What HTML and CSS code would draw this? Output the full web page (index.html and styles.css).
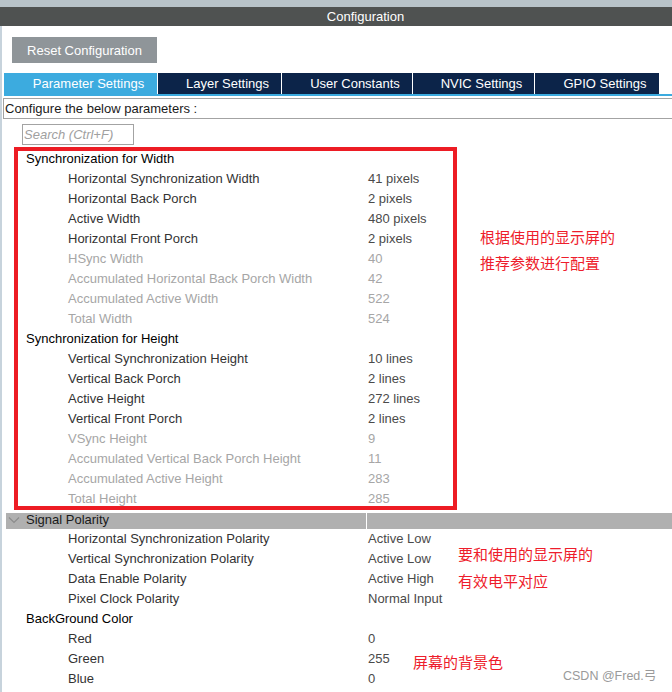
FILE: index.html
```html
<!DOCTYPE html>
<html>
<head>
<meta charset="utf-8">
<link rel="stylesheet" href="styles.css">
</head>
<body>
<div class="topstrip"></div>
<div class="titlebar">Configuration</div>
<div class="main">
  <div class="toolbar"><button class="reset">Reset Configuration</button></div>
  <div class="tabs">
    <div class="tab active t1">Parameter Settings</div>
    <div class="tab t2">Layer Settings</div>
    <div class="tab t3">User Constants</div>
    <div class="tab t4">NVIC Settings</div>
    <div class="tab t5">GPIO Settings</div>
  </div>
  <div class="tabline"></div>
  <div class="configure">Configure the below parameters :</div>
  <div class="search">Search (Ctrl+F)</div>
  <div class="rows">
    <div class="row head"><span class="lbl">Synchronization for Width</span></div>
    <div class="row item"><span class="lbl">Horizontal Synchronization Width</span><span class="val">41 pixels</span></div>
    <div class="row item"><span class="lbl">Horizontal Back Porch</span><span class="val">2 pixels</span></div>
    <div class="row item"><span class="lbl">Active Width</span><span class="val">480 pixels</span></div>
    <div class="row item"><span class="lbl">Horizontal Front Porch</span><span class="val">2 pixels</span></div>
    <div class="row item dis"><span class="lbl">HSync Width</span><span class="val">40</span></div>
    <div class="row item dis"><span class="lbl">Accumulated Horizontal Back Porch Width</span><span class="val">42</span></div>
    <div class="row item dis"><span class="lbl">Accumulated Active Width</span><span class="val">522</span></div>
    <div class="row item dis"><span class="lbl">Total Width</span><span class="val">524</span></div>
    <div class="row head"><span class="lbl">Synchronization for Height</span></div>
    <div class="row item"><span class="lbl">Vertical Synchronization Height</span><span class="val">10 lines</span></div>
    <div class="row item"><span class="lbl">Vertical Back Porch</span><span class="val">2 lines</span></div>
    <div class="row item"><span class="lbl">Active Height</span><span class="val">272 lines</span></div>
    <div class="row item"><span class="lbl">Vertical Front Porch</span><span class="val">2 lines</span></div>
    <div class="row item dis"><span class="lbl">VSync Height</span><span class="val">9</span></div>
    <div class="row item dis"><span class="lbl">Accumulated Vertical Back Porch Height</span><span class="val">11</span></div>
    <div class="row item dis"><span class="lbl">Accumulated Active Height</span><span class="val">283</span></div>
    <div class="row item dis"><span class="lbl">Total Height</span><span class="val">285</span></div>
    <div class="row group">
      <div class="gcell">
        <svg class="chev" width="12" height="8" viewBox="0 0 12 8"><polyline points="1,1.5 6,6.5 11,1.5" fill="none" stroke="#8c8c8c" stroke-width="1.2"/></svg>
        <span class="gtext">Signal Polarity</span>
      </div>
      <div class="gcell2"></div>
    </div>
    <div class="row item"><span class="lbl">Horizontal Synchronization Polarity</span><span class="val">Active Low</span></div>
    <div class="row item"><span class="lbl">Vertical Synchronization Polarity</span><span class="val">Active Low</span></div>
    <div class="row item"><span class="lbl">Data Enable Polarity</span><span class="val">Active High</span></div>
    <div class="row item"><span class="lbl">Pixel Clock Polarity</span><span class="val">Normal Input</span></div>
    <div class="row head"><span class="lbl">BackGround Color</span></div>
    <div class="row item"><span class="lbl">Red</span><span class="val">0</span></div>
    <div class="row item"><span class="lbl">Green</span><span class="val">255</span></div>
    <div class="row item"><span class="lbl">Blue</span><span class="val">0</span></div>
  </div>
</div>
<div class="redbox"></div>
<div class="note note1">根据使用的显示屏的<br>推荐参数进行配置</div>
<div class="note note2">要和使用的显示屏的<br>有效电平对应</div>
<div class="note note3">屏幕的背景色</div>
<div class="watermark">CSDN @Fred.弓</div>
</body>
</html>
```
FILE: styles.css
```css
html, body {
  margin: 0;
  padding: 0;
}
body {
  width: 672px;
  height: 692px;
  overflow: hidden;
  position: relative;
  background: #ffffff;
  font-family: "Liberation Sans", Arial, sans-serif;
  font-size: 13px;
  color: #222;
}
.topstrip {
  height: 7px;
  background: #b8c3c9;
}
.titlebar {
  height: 19px;
  line-height: 19px;
  background: #4f5251;
  color: #ffffff;
  text-align: center;
  padding-left: 59px;
}
.main {
  border-left: 2px solid #c7d3dc;
  height: 666px;
}
.toolbar {
  padding: 11px 0 0 10px;
}
.reset {
  display: block;
  width: 145px;
  height: 26px;
  border: none;
  margin: 0;
  padding: 0;
  background: #8f9599;
  color: #ffffff;
  font-family: "Liberation Sans", Arial, sans-serif;
  font-size: 13px;
}
.tabs {
  display: flex;
  gap: 1px;
  margin-top: 10px;
  padding-left: 2px;
  height: 21px;
}
.tab {
  background: #0c2449;
  color: #ffffff;
  line-height: 21px;
  display: flex;
  justify-content: center;
  padding-left: 16px;
  box-sizing: border-box;
}
.tab.active {
  background: #3cabdf;
}
.t1 { width: 153px; }
.t2 { width: 123px; }
.t3 { width: 130px; }
.t4 { width: 121px; }
.t5 { width: 124px; }
.tabline {
  margin-left: 2px;
  height: 2px;
  background: #3cabdf;
}
.configure {
  margin-top: 2px;
  margin-left: 1px;
  height: 19px;
  line-height: 19px;
  border: 1px solid #a3a3a3;
  border-right: none;
  padding-left: 1px;
  color: #1a1a1a;
}
.search {
  margin-top: 5px;
  margin-left: 20px;
  width: 109px;
  height: 19px;
  line-height: 19px;
  border: 1px solid #a3a3a3;
  padding-left: 1px;
  font-style: italic;
  color: #a0a0a0;
}
.rows {
  margin-top: 4px;
}
.row {
  height: 20px;
  line-height: 20px;
  display: flex;
  white-space: nowrap;
}
.row .lbl {
  display: block;
}
.row.head .lbl {
  padding-left: 24px;
  color: #000000;
}
.row.item .lbl {
  padding-left: 66px;
  width: 300px;
  color: #333333;
}
.row .val {
  color: #4a4a4a;
}
.row.dis .lbl,
.row.dis .val {
  color: #a6a6a6;
}
.row.group {
  margin-left: 4px;
  border-top: 4px solid #ffffff;
  height: 16px;
  line-height: 14px;
}
.gcell {
  width: 360px;
  background: #b0b0b0;
  display: flex;
  align-items: flex-start;
  color: #1a1a1a;
}
.gtext {
  display: block;
  line-height: 14px;
}
.gcell2 {
  flex: 1;
  background: #b0b0b0;
  border-left: 1px solid #ffffff;
}
.chev {
  margin-left: 2px;
  margin-right: 6px;
  margin-top: 3px;
}
.redbox {
  position: absolute;
  left: 14px;
  top: 147px;
  width: 443px;
  height: 363px;
  border: 4px solid #ed1c24;
  box-sizing: border-box;
}
.note {
  position: absolute;
  font-family: "Noto Sans CJK SC", sans-serif;
  font-size: 15px;
  color: #ee1d2c;
  white-space: nowrap;
}
.note1 {
  left: 480px;
  top: 224px;
  line-height: 26px;
}
.note2 {
  left: 458px;
  top: 540px;
  line-height: 27px;
}
.note3 {
  left: 413px;
  top: 649px;
  line-height: 26px;
}
.watermark {
  position: absolute;
  left: 563px;
  top: 667px;
  line-height: 18px;
  font-family: "Liberation Sans", "Noto Sans CJK SC", sans-serif;
  font-size: 12.5px;
  color: #9a9a9a;
}
```
